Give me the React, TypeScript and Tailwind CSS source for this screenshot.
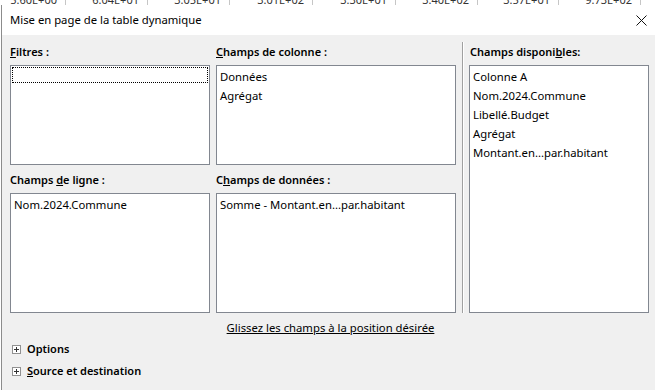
import { Fragment } from "react";

const font = { fontFamily: '"Noto Sans", "Segoe UI", sans-serif' };

const sheetCells = [
  { w: "w-[66px]", v: "5.60E+00" },
  { w: "w-[82px]", v: "6.04E+01" },
  { w: "w-[82px]", v: "3.05E+01" },
  { w: "w-[83px]", v: "3.01E+02" },
  { w: "w-[83px]", v: "3.30E+01" },
  { w: "w-[82px]", v: "3.40E+02" },
  { w: "w-[81px]", v: "3.57E+01" },
  { w: "w-[82px]", v: "9.73E+02" },
];

function Label({ children, className = "" }: { children: React.ReactNode; className?: string }) {
  return <div className={`font-semibold leading-[16px] text-[11px] text-black whitespace-nowrap ${className}`}>{children}</div>;
}

function ListBox({ items, className = "", focus = false }: { items: string[]; className?: string; focus?: boolean }) {
  return (
    <div className={`border border-[#828790] bg-white pt-[1px] ${className}`}>
      {focus && <div className="h-[16px] mx-[1px] border border-dotted border-black" />}
      {items.map((item) => (
        <div key={item} className="pl-[3px] leading-[19px] text-[11.3px] text-black whitespace-nowrap">
          {item}
        </div>
      ))}
    </div>
  );
}

function Expander({ children }: { children: React.ReactNode }) {
  return (
    <div className="h-[22px] flex items-center gap-[6px] pl-[2px]">
      <span className="w-[9px] h-[9px] border border-[#919191] bg-white flex items-center justify-center">
        <svg width="7" height="7" viewBox="0 0 7 7">
          <path d="M1 3.5h5M3.5 1v5" stroke="#333" strokeWidth="1" />
        </svg>
      </span>
      <span className="font-semibold text-[11px] leading-[16px] text-black">{children}</span>
    </div>
  );
}

export default function App() {
  return (
    <div className="w-[655px] h-[390px] bg-white overflow-hidden flex flex-col" style={font}>
      {/* spreadsheet peeking above the dialog */}
      <div className="h-[5px] overflow-hidden flex shrink-0">
        {sheetCells.map((c) => (
          <Fragment key={c.v}>
            <div className={`${c.w} shrink-0 border-r border-[#c6c6c6] text-right pr-[8px] text-[11px] leading-[14px] text-[#333]`}>
              <div className="-mt-[7px]">{c.v}</div>
            </div>
          </Fragment>
        ))}
      </div>
      <div className="flex-1 flex pl-[1px]">
        <div className="flex-1 flex flex-col border-l border-[#8c8c8c]">
          {/* title bar */}
          <div className="h-[30px] bg-white flex items-center justify-between pl-[8px] pr-[8px] shrink-0">
            <span className="text-[11.3px] text-black">Mise en page de la table dynamique</span>
            <svg width="11" height="11" viewBox="0 0 11 11">
              <path d="M0.5 0.5l10 10M10.5 0.5l-10 10" stroke="#111" strokeWidth="1" />
            </svg>
          </div>
          {/* body */}
          <div className="flex-1 bg-[#f0f0f0] pl-[8px] pt-[7px]">
            <div className="flex">
              <div className="grid grid-cols-[200px_240px] gap-x-[6px]">
                <div>
                  <Label className="h-[23px] pt-[2px]">
                    <u>F</u>iltres :
                  </Label>
                  <ListBox items={[]} focus className="h-[100px]" />
                </div>
                <div>
                  <Label className="h-[23px] pt-[2px]">
                    <u>C</u>hamps de colonne :
                  </Label>
                  <ListBox items={["Données", "Agrégat"]} className="h-[100px]" />
                </div>
                <div>
                  <Label className="h-[28px] pt-[7px]">
                    Champs <u>d</u>e ligne :
                  </Label>
                  <ListBox items={["Nom.2024.Commune"]} className="h-[120px]" />
                </div>
                <div>
                  <Label className="h-[28px] pt-[7px]">
                    C<u>h</u>amps de données :
                  </Label>
                  <ListBox items={["Somme - Montant.en...par.habitant"]} className="h-[120px]" />
                </div>
              </div>
              <div className="w-[2px] ml-[6px] border-l border-[#a0a0a0] border-r border-r-white" />
              <div className="ml-[5px] w-[180px]">
                <Label className="h-[23px] pt-[2px] pl-[1px]">
                  Champs disponi<u>b</u>les:
                </Label>
                <ListBox
                  items={["Colonne A", "Nom.2024.Commune", "Libellé.Budget", "Agrégat", "Montant.en...par.habitant"]}
                  className="h-[248px]"
                />
              </div>
            </div>
            <div className="mt-[7px] text-center text-[11.3px] leading-[16px] text-black underline pr-[4px]">
              Glissez les champs à la position désirée
            </div>
            <div className="mt-[2px]">
              <Expander>Options</Expander>
              <Expander>
                <u>S</u>ource et destination
              </Expander>
            </div>
          </div>
        </div>
      </div>
    </div>
  );
}
